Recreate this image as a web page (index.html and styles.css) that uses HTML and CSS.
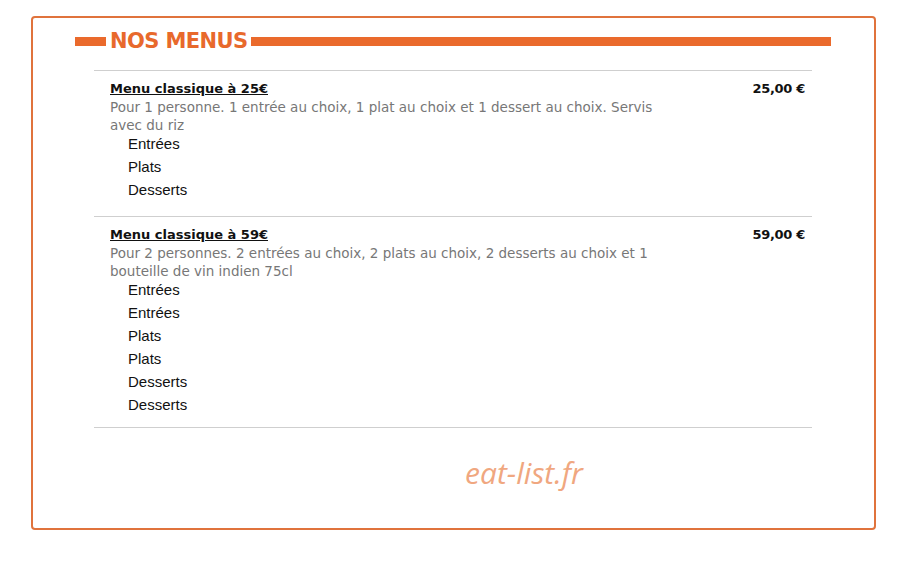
FILE: index.html
```html
<!DOCTYPE html>
<html lang="fr">
<head>
    <meta charset="UTF-8">
    <meta name="viewport" content="width=device-width, initial-scale=1.0">
    <title>Nos menus</title>
    <link rel="stylesheet" href="styles.css">
</head>
<body>
    <div id="menus">
        <h2 class="title"><span class="bar short"></span><span class="label">NOS MENUS</span><span class="bar long"></span></h2>

        <div class="list">
            <div class="menu">
                <div class="head">
                    <div class="info">
                        <div class="name">Menu classique à 25€</div>
                        <div class="desc">Pour 1 personne. 1 entrée au choix, 1 plat au choix et 1 dessert au choix. Servis avec du riz</div>
                    </div>
                    <div class="price">25,00 €</div>
                </div>
                <ul class="items">
                    <li>Entrées</li>
                    <li>Plats</li>
                    <li>Desserts</li>
                </ul>
            </div>

            <div class="menu">
                <div class="head">
                    <div class="info">
                        <div class="name">Menu classique à 59€</div>
                        <div class="desc">Pour 2 personnes. 2 entrées au choix, 2 plats au choix, 2 desserts au choix et 1 bouteille de vin indien 75cl</div>
                    </div>
                    <div class="price">59,00 €</div>
                </div>
                <ul class="items">
                    <li>Entrées</li>
                    <li>Entrées</li>
                    <li>Plats</li>
                    <li>Plats</li>
                    <li>Desserts</li>
                    <li>Desserts</li>
                </ul>
            </div>
        </div>

        <div class="brand">eat-list.fr</div>
    </div>
</body>
</html>
```

FILE: styles.css
```css
body {
    margin: 0;
    padding: 16px 29px 0 31px;
    background-color: #fff;
    font-family: "DejaVu Sans", sans-serif;
}

#menus {
    border: 2px solid #e0733c;
    border-radius: 4px;
    height: 514px;
    box-sizing: border-box;
    padding: 10px 43px 0 42px;
}

.title {
    display: flex;
    align-items: center;
    margin: 0;
    height: 26px;
}

.title .bar {
    height: 9px;
    background-color: #ea6a2c;
}

.title .short {
    width: 31px;
}

.title .long {
    flex: 1;
}

.title .label {
    color: #e8692c;
    font-size: 21px;
    font-weight: bold;
    padding: 0 4px 0 4px;
    letter-spacing: -0.6px;
}

.list {
    margin: 16px 19px 0 19px;
    border-top: 1px solid #cfcfcf;
}

.menu {
    border-bottom: 1px solid #cfcfcf;
    padding: 9px 7px 15px 16px;
}

.menu:last-child {
    padding-bottom: 11px;
}

.head {
    display: flex;
    justify-content: space-between;
}

.info {
    width: 560px;
}

.name {
    font-size: 13px;
    font-weight: bold;
    text-decoration: underline;
    color: #111;
    line-height: 18px;
}

.desc {
    font-size: 13.5px;
    color: #777;
    line-height: 18px;
}

.price {
    font-size: 13px;
    font-weight: bold;
    color: #111;
    line-height: 18px;
    letter-spacing: -0.3px;
}

.items {
    list-style: none;
    margin: -2px 0 0 0;
    padding: 0 0 0 18px;
}

.items li {
    font-family: "Liberation Sans", sans-serif;
    font-size: 15px;
    line-height: 23px;
    color: #111;
}

.brand {
    text-align: center;
    margin: 24px 0 0 142px;
    font-family: "Open Sans", sans-serif;
    font-style: italic;
    font-size: 30px;
    color: #f0a780;
}
```
